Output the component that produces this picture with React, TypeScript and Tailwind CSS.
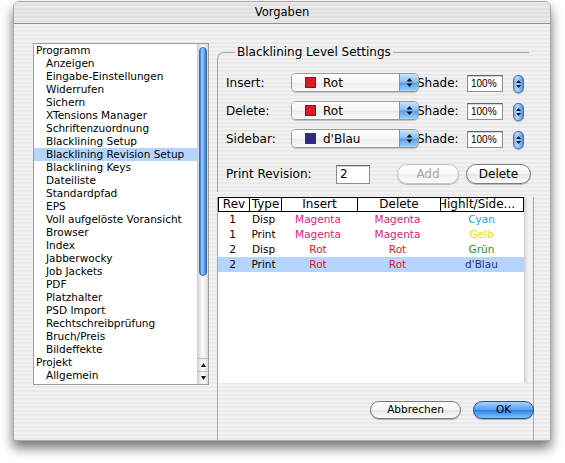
const listItems: { label: string; child?: boolean; selected?: boolean }[] = [
  { label: "Programm" },
  { label: "Anzeigen", child: true },
  { label: "Eingabe-Einstellungen", child: true },
  { label: "Widerrufen", child: true },
  { label: "Sichern", child: true },
  { label: "XTensions Manager", child: true },
  { label: "Schriftenzuordnung", child: true },
  { label: "Blacklining Setup", child: true },
  { label: "Blacklining Revision Setup", child: true, selected: true },
  { label: "Blacklining Keys", child: true },
  { label: "Dateiliste", child: true },
  { label: "Standardpfad", child: true },
  { label: "EPS", child: true },
  { label: "Voll aufgelöste Voransicht", child: true },
  { label: "Browser", child: true },
  { label: "Index", child: true },
  { label: "Jabberwocky", child: true },
  { label: "Job Jackets", child: true },
  { label: "PDF", child: true },
  { label: "Platzhalter", child: true },
  { label: "PSD Import", child: true },
  { label: "Rechtschreibprüfung", child: true },
  { label: "Bruch/Preis", child: true },
  { label: "Bildeffekte", child: true },
  { label: "Projekt" },
  { label: "Allgemein", child: true },
];

const levels = [
  { label: "Insert:", swatch: "bg-[#e01a22]", value: "Rot" },
  { label: "Delete:", swatch: "bg-[#e01a22]", value: "Rot" },
  { label: "Sidebar:", swatch: "bg-[#2c2a8a]", value: "d'Blau" },
];

const rows = [
  { rev: "1", type: "Disp", ins: "Magenta", insC: "text-[#d81e7e]", del: "Magenta", delC: "text-[#d81e7e]", side: "Cyan", sideC: "text-[#1c9fe2]" },
  { rev: "1", type: "Print", ins: "Magenta", insC: "text-[#d81e7e]", del: "Magenta", delC: "text-[#d81e7e]", side: "Gelb", sideC: "text-[#eedd00]" },
  { rev: "2", type: "Disp", ins: "Rot", insC: "text-[#e0161c]", del: "Rot", delC: "text-[#e0161c]", side: "Grün", sideC: "text-[#1f9330]" },
  { rev: "2", type: "Print", ins: "Rot", insC: "text-[#e0161c]", del: "Rot", delC: "text-[#e0161c]", side: "d'Blau", sideC: "text-[#2c2a8a]", selected: true },
];

function UpDown() {
  return (
    <svg width="7" height="11" viewBox="0 0 7 11">
      <path d="M0.5 4.5 L3.5 1 L6.5 4.5Z M0.5 6.5 L3.5 10 L6.5 6.5Z" fill="#141414" />
    </svg>
  );
}

function Popup({ swatch, value }: { swatch: string; value: string }) {
  return (
    <div className="relative z-10 flex h-[19px] w-[128px] shrink-0 overflow-hidden rounded-[5px] border border-[#9a9a9a] shadow-[0_1px_1px_rgba(0,0,0,0.2)]">
      <div className="flex flex-1 items-center bg-[linear-gradient(180deg,#ffffff_0%,#f5f5f5_50%,#ebebeb_52%,#fafafa_100%)] pl-[13px]">
        <span className={`h-[11px] w-[11px] border border-[#3a3a3a] ${swatch}`} />
        <span className="ml-[7px] text-[12px] leading-none">{value}</span>
      </div>
      <div className="flex w-[19px] items-center justify-center border-l border-[#6f95cc] bg-[linear-gradient(180deg,#c9e3fd_0%,#8cc0f4_45%,#5aa0ec_55%,#9fd3fb_100%)]">
        <UpDown />
      </div>
    </div>
  );
}

function Stepper() {
  return (
    <div className="flex h-[18px] w-[11px] items-center justify-center rounded-[5px] border border-[#4a75b5] bg-[linear-gradient(90deg,#6ea8ec_0%,#b9dcfd_35%,#7fb8f2_65%,#4f90e4_100%)] shadow-[0_1px_1px_rgba(0,0,0,0.25)]">
      <svg width="5" height="10" viewBox="0 0 5 10">
        <path d="M0 4 L2.5 1 L5 4Z M0 6 L2.5 9 L5 6Z" fill="#141414" />
      </svg>
    </div>
  );
}

function Field({ text, w, h, small }: { text: string; w: string; h: string; small?: boolean }) {
  return (
    <div
      className={`flex ${w} ${h} shrink-0 items-center border border-[#8d8d8d] border-t-[#666] bg-white pl-[3px] shadow-[inset_0_1px_1px_rgba(0,0,0,0.18)] ${
        small ? "font-['Liberation_Sans',sans-serif] text-[10px]" : "text-[12px]"
      }`}
    >
      {text}
    </div>
  );
}

function Button({ label, w, disabled, primary, size }: { label: string; w: string; disabled?: boolean; primary?: boolean; size: string }) {
  const look = primary
    ? "border-[#24509a] bg-[linear-gradient(180deg,#a9d2fb_0%,#5a9ff0_48%,#2f7fe6_52%,#7fc4fb_100%)] text-black"
    : disabled
      ? "border-[#c4c4c4] bg-[linear-gradient(180deg,#ffffff_0%,#f7f7f7_50%,#efefef_52%,#fbfbfb_100%)] text-[#a8a8a8]"
      : "border-[#7c7c7c] bg-[linear-gradient(180deg,#ffffff_0%,#f5f5f5_50%,#e6e6e6_52%,#fcfcfc_100%)] text-black";
  return (
    <div
      className={`flex ${w} ${size} shrink-0 items-center justify-center rounded-full border ${look} shadow-[0_1px_1px_rgba(0,0,0,0.25)]`}
    >
      {label}
    </div>
  );
}

export default function App() {
  return (
    <div className="h-[463px] w-[565px] overflow-hidden bg-white pl-[13px] pt-px font-['DejaVu_Sans',sans-serif] text-black">
      <div className="flex h-[440px] w-[538px] flex-col overflow-hidden rounded-t-[6px] border border-[#a9a9a9] shadow-[0_7px_12px_rgba(0,0,0,0.55)]">
        {/* title bar */}
        <div className="flex h-[22px] shrink-0 items-center justify-center border-b border-[#8f8f8f] bg-[repeating-linear-gradient(180deg,#e9e9e9_0px,#e9e9e9_2px,#e1e1e1_2px,#e1e1e1_4px)] text-[11.5px]">
          Vorgaben
        </div>

        {/* body */}
        <div className="flex flex-1 bg-[repeating-linear-gradient(180deg,#f2f2f2_0px,#f2f2f2_2px,#eaeaea_2px,#eaeaea_4px)] pl-[19px] pt-[19px]">
          {/* preference list */}
          <div className="flex h-[342px] w-[176px] shrink-0 border border-[#9c9c9c] bg-white">
            <div className="flex-1 overflow-hidden">
              {listItems.map((it) => (
                <div
                  key={it.label}
                  className={`h-[13px] whitespace-nowrap text-[10.5px] leading-[13px] ${it.child ? "pl-[12px]" : "pl-[2px]"} ${
                    it.selected ? "bg-[#b5d5ff]" : ""
                  }`}
                >
                  {it.label}
                </div>
              ))}
            </div>
            <div className="flex w-[11px] flex-col border-l border-[#cfcfcf] bg-[linear-gradient(90deg,#d8d8d8_0%,#f7f7f7_40%,#f7f7f7_60%,#dadada_100%)]">
              <div className="mx-[1px] mt-[3px] h-[229px] rounded-full border border-[#3b6cb8] bg-[linear-gradient(90deg,#2f6ac8_0%,#a3cff8_30%,#6cb0f1_60%,#4a92e6_85%,#2c65c0_100%)]" />
              <div className="flex-1" />
              <div className="flex h-[13px] items-center justify-center border-t border-[#bdbdbd]">
                <svg width="5" height="4" viewBox="0 0 5 4">
                  <path d="M0 4 L2.5 0 L5 4Z" fill="#111" />
                </svg>
              </div>
              <div className="flex h-[13px] items-center justify-center border-t border-[#bdbdbd]">
                <svg width="5" height="4" viewBox="0 0 5 4">
                  <path d="M0 0 L2.5 4 L5 0Z" fill="#111" />
                </svg>
              </div>
            </div>
          </div>

          {/* settings side */}
          <div className="ml-[8px] flex w-[317px] flex-col">
            <fieldset className="mt-[2px] h-[147px] w-[312px] min-w-0 rounded-tl-[7px] border-l border-t border-[#a6a6a6] pl-[8px] pt-[14px]">
              <legend className="ml-[9px] px-[2px] text-[12px] leading-[14px]">Blacklining Level Settings</legend>
              <div className="flex flex-col gap-[9px] text-[12px]">
                {levels.map((l) => (
                  <div key={l.label} className="flex h-[19px] items-center">
                    <span className="w-[65px] shrink-0">{l.label}</span>
                    <Popup swatch={l.swatch} value={l.value} />
                    <span className="-ml-[2px] w-[43px] shrink-0">Shade:</span>
                    <div className="ml-[7px] mt-[2px]">
                      <Field text="100%" w="w-[36px]" h="h-[17px]" small />
                    </div>
                    <div className="ml-[10px] mt-[3px]">
                      <Stepper />
                    </div>
                  </div>
                ))}
                <div className="mt-[7px] flex h-[20px] items-center">
                  <span className="w-[110px] shrink-0">Print Revision:</span>
                  <Field text="2" w="w-[34px]" h="h-[19px]" />
                  <div className="ml-[27px]">
                    <Button label="Add" w="w-[62px]" size="h-[20px] text-[12px]" disabled />
                  </div>
                  <div className="ml-[7px]">
                    <Button label="Delete" w="w-[65px]" size="h-[20px] text-[12px]" />
                  </div>
                </div>
              </div>
            </fieldset>

            {/* revisions table frame */}
            <div className="mt-[5px] flex flex-1 flex-col border-x border-[#a8a8a8]">
              <div className="flex h-[186px]">
                <div className="w-[306px] bg-white">
                  <div className="flex h-[15px] border-y border-l border-black text-[12px] leading-[13px]">
                    <div className="w-[31px] border-r border-black text-center">Rev</div>
                    <div className="w-[32px] border-r border-black text-center">Type</div>
                    <div className="w-[76px] border-r border-black text-center">Insert</div>
                    <div className="w-[83px] border-r border-black text-center">Delete</div>
                    <div className="flex-1 overflow-hidden whitespace-nowrap border-r border-black">
                      <span className="-ml-[3px] block">Highlt/Side...</span>
                    </div>
                  </div>
                  {rows.map((r, i) => (
                    <div
                      key={i}
                      className={`flex h-[15px] items-center text-[10.5px] ${r.selected ? "bg-[#b5d5ff]" : ""}`}
                    >
                      <div className="w-[29px] text-center">{r.rev}</div>
                      <div className="w-[33px] text-center">{r.type}</div>
                      <div className={`w-[76px] text-center ${r.insC}`}>{r.ins}</div>
                      <div className={`w-[83px] text-center ${r.delC}`}>{r.del}</div>
                      <div className={`flex-1 text-center ${r.sideC}`}>{r.side}</div>
                    </div>
                  ))}
                </div>
                <div className="flex-1 border-l border-[#d0d0d0] bg-[linear-gradient(90deg,#dcdcdc_0%,#f4f4f4_45%,#eeeeee_100%)]" />
              </div>

              <div className="mt-[18px] flex justify-end gap-[12px]">
                <Button label="Abbrechen" w="w-[91px]" size="h-[18px] text-[10.5px]" />
                <div className="-mr-px">
                  <Button label="OK" w="w-[61px]" size="h-[18px] text-[10.5px]" primary />
                </div>
              </div>
            </div>
          </div>
        </div>
      </div>
    </div>
  );
}
